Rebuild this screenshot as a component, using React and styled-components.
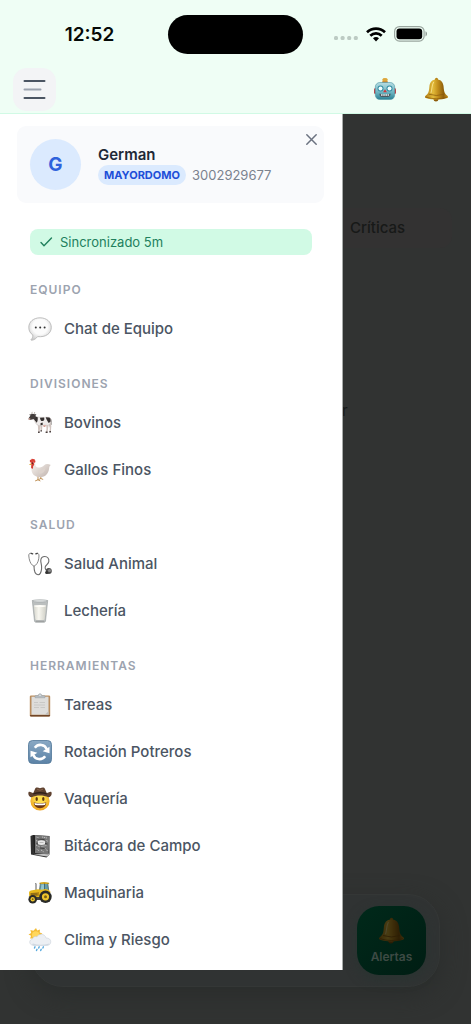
import styled, { createGlobalStyle, css } from 'styled-components';

const GlobalStyle = createGlobalStyle`
	* {
		box-sizing: border-box;
	}

	body {
		margin: 0;
		font-family: Inter, "Liberation Sans", sans-serif;
		background-color: #effef5;
	}

	button {
		border: none;
		padding: 0;
		background: none;
		font-family: inherit;
		cursor: pointer;
	}
`;

const Page = styled.div`
	min-height: 100vh;
	display: flex;
	flex-direction: column;
`;

const Header = styled.header`
	background-color: #effef5;
	border-bottom: 1px solid #d1fae5;
`;

const StatusBar = styled.div`
	display: grid;
	grid-template-columns: 1fr 135px 1fr;
	align-items: center;
	height: 68px;
`;

const Time = styled.time`
	padding-left: 11px;
	text-align: center;
	font-size: 19px;
	font-weight: 600;
	color: #050a07;
`;

const Island = styled.div`
	height: 39px;
	border-radius: 20px;
	background-color: #000;
`;

const Signals = styled.div`
	display: flex;
	justify-content: flex-end;
	align-items: center;
	gap: 8px;
	padding-right: 43px;
`;

const Toolbar = styled.div`
	display: flex;
	justify-content: space-between;
	align-items: center;
	padding: 0 22px 2px 13px;
`;

const MenuButton = styled.button`
	display: grid;
	place-items: center;
	width: 43px;
	height: 43px;
	border-radius: 14px;
	background-color: #f3f4f6;
`;

const Actions = styled.div`
	display: flex;
	gap: 27px;
`;

const IconButton = styled.button`
	display: flex;
`;

const Stage = styled.main`
	position: relative;
	flex: 1;
	display: flex;
	flex-direction: column;
	background-color: #313332;
`;

const Drawer = styled.aside`
	position: absolute;
	top: 0;
	left: 0;
	width: calc(100% - 128px);
	padding: 12px 18px 7px 17px;
	background-color: #fff;
	border-right: 1px solid #a8acaa;
`;

const ProfileCard = styled.div`
	display: flex;
	align-items: flex-start;
	gap: 17px;
	padding: 13px 6px 13px 13px;
	border-radius: 9px;
	background-color: #f9fafc;
`;

const Avatar = styled.div`
	display: grid;
	place-items: center;
	width: 51px;
	height: 51px;
	border-radius: 50%;
	background-color: #dbeafe;
	color: #2f62dc;
	font-size: 19px;
	font-weight: 700;
`;

const Profile = styled.div`
	flex: 1;
	padding-top: 6px;
`;

const Name = styled.div`
	font-size: 15px;
	line-height: 20px;
	font-weight: 600;
	color: #1f2937;
`;

const Meta = styled.div`
	display: flex;
	align-items: center;
	gap: 6px;
	font-size: 13px;
	color: #7b828e;
`;

const Role = styled.span`
	padding: 0 6px;
	border-radius: 10px;
	background-color: #dbeafe;
	color: #1d4ed8;
	font-size: 11px;
	line-height: 20px;
	font-weight: 700;
`;

const CloseButton = styled.button`
	display: flex;
	margin-top: -6px;
`;

const SyncStatus = styled.div`
	display: flex;
	align-items: center;
	gap: 7px;
	height: 26px;
	margin: 26px 12px 26px 13px;
	padding: 0 10px;
	border-radius: 8px;
	background-color: #d1fae5;
	color: #21805d;
	font-size: 13px;
`;

const Section = styled.section`
	& + & {
		margin-top: 23px;
	}
`;

const SectionTitle = styled.h2`
	margin: 0 0 7px;
	padding-left: 13px;
	font-size: 12px;
	line-height: 17px;
	font-weight: 600;
	letter-spacing: 1px;
	color: #9ca3af;
`;

const MenuItem = styled.a`
	display: flex;
	align-items: center;
	gap: 12px;
	height: 47px;
	padding-left: 11px;
	font-size: 15px;
	font-weight: 500;
	color: #4b5563;
	text-decoration: none;
`;

const dimmed = css`
	margin-left: calc(100% - 129px);
	color: #171918;
	font-size: 15px;
	line-height: 20px;
`;

const FilterChip = styled.div`
	${dimmed}
	margin-top: 94px;
	margin-right: 19px;
	padding: 10px 8px;
	border-radius: 0 12px 12px 0;
	background-color: #333232;
	font-weight: 500;
`;

const Caption = styled.div`
	${dimmed}
	margin-top: 153px;
`;

const BottomNav = styled.nav`
	display: flex;
	justify-content: flex-end;
	margin: auto 31px 37px;
	padding: 11px 13px;
	border: 1px solid #343736;
	border-radius: 32px;
	background-color: #303333;
	box-shadow: 0 8px 24px #2a2d2c;
`;

const NavTab = styled.button`
	display: flex;
	flex-direction: column;
	align-items: center;
	justify-content: center;
	gap: 5px;
	width: 69px;
	height: 69px;
	border-radius: 22px;
	background: linear-gradient(135deg, #00291a, #001d13);
	box-shadow: 0 4px 12px #293431;
	color: #3d4a44;
	font-size: 12px;
	line-height: 15px;
	font-weight: 600;

	svg {
		filter: brightness(0.32);
	}
`;

function SignalDots() {
	return (
		<svg width="24" height="12" viewBox="0 0 24 12" fill="#bccbc3">
			<rect x="0" y="8" width="4" height="4" rx="1.5" />
			<rect x="6.6" y="8" width="4" height="4" rx="1.5" />
			<rect x="13.2" y="8" width="4" height="4" rx="1.5" />
			<rect x="19.8" y="8" width="4" height="4" rx="1.5" />
		</svg>
	);
}

function Wifi() {
	return (
		<svg width="20" height="15" viewBox="0 0 20 15" fill="none" stroke="#000" strokeWidth="2.7">
			<path d="M1 5.2C6.2.3 13.800.3 19 5.200" />
			<path d="M4.300 8.700c3.300-3.100 8.100-3.100 11.400 0" />
			<path d="M7 11.200c1.700-1.500 4.300-1.500 6 0L10 14.500z" fill="#000" stroke="none" />
		</svg>
	);
}

function Battery() {
	return (
		<svg width="34" height="16" viewBox="0 0 34 16">
			<rect x="0.6" y="0.6" width="29.500" height="14.500" rx="4.800" fill="none" stroke="#9aa69f" strokeWidth="1.200" />
			<rect x="2.500" y="2.500" width="25.700" height="10.700" rx="3" fill="#000" />
			<path d="M31.500 5.300c2 .8 2 4.300 0 5.100z" fill="#8f9a94" />
		</svg>
	);
}

function MenuLines() {
	return (
		<svg width="23" height="21" viewBox="0 0 23 21" strokeWidth="2" strokeLinecap="round">
			<path d="M1.500 2h20M1.500 19h20" stroke="#4b5563" />
			<path d="M1.500 10.500h16" stroke="#9ca3af" />
		</svg>
	);
}

function Cross() {
	return (
		<svg width="13" height="13" viewBox="0 0 13 13" stroke="#6b7280" strokeWidth="1.500" strokeLinecap="round">
			<path d="M1.800 1.800l9.400 9.400M11.200 1.800l-9.400 9.400" />
		</svg>
	);
}

function Check() {
	return (
		<svg width="13" height="12" viewBox="0 0 13 12" fill="none" stroke="#21805d" strokeWidth="1.400" strokeLinecap="round" strokeLinejoin="round">
			<path d="M1 6.500l3 3.200L11.500 2" />
		</svg>
	);
}

function Robot() {
	return (
		<svg width="24" height="24" viewBox="0 0 24 24">
			<defs>
				<linearGradient id="robotFace" x1="0" y1="0" x2="0" y2="1">
					<stop offset="0" stopColor="#b7dde2" />
					<stop offset="0.6" stopColor="#68b3c0" />
					<stop offset="1" stopColor="#2a7f92" />
				</linearGradient>
			</defs>
			<path d="M9.500 6V2.300q0-1.300 2.500-1.300t2.500 1.300V6z" fill="#dda73c" />
			<path d="M9.300 4.500h5.400V7H9.300z" fill="#b9793b" />
			<rect x="1" y="11" width="3.500" height="6" rx="1.500" fill="#c23c43" />
			<rect x="19.500" y="11" width="3.500" height="6" rx="1.500" fill="#c23c43" />
			<rect x="2.300" y="5.500" width="19.400" height="17" rx="4.500" fill="url(#robotFace)" stroke="#4e95a4" strokeWidth="0.600" />
			<circle cx="7.500" cy="11.600" r="3" fill="#348da3" />
			<circle cx="16.500" cy="11.600" r="3" fill="#348da3" />
			<circle cx="7.500" cy="11.600" r="2" fill="#f2feff" />
			<circle cx="16.500" cy="11.600" r="2" fill="#f2feff" />
			<path d="M12 12.300l1.900 3h-3.800z" fill="#cf383a" />
			<path d="M6.500 16.500q5.500 2 11 0v1.500q-1 2-2.500 2H9q-2 0-2.500-2z" fill="#4b5961" />
			<path d="M8 18h8" stroke="#e5f0f0" strokeWidth="1.500" strokeDasharray="1.600 0.600" />
		</svg>
	);
}

function Bell({ size = 25 }) {
	return (
		<svg width={size} height={size} viewBox="0 0 24 24">
			<defs>
				<linearGradient id="bellBody" x1="0" y1="0" x2="1" y2="0">
					<stop offset="0" stopColor="#b07d12" />
					<stop offset="0.35" stopColor="#e3bb3a" />
					<stop offset="0.55" stopColor="#c4911d" />
					<stop offset="0.8" stopColor="#8f600c" />
					<stop offset="1" stopColor="#c99722" />
				</linearGradient>
			</defs>
			<circle cx="12" cy="2.200" r="1.500" fill="#b78318" />
			<ellipse cx="11.500" cy="21.500" rx="2.300" ry="2" fill="#8d5c0c" />
			<path d="M12 2.300C7.500 2.300 5.600 5 5.200 9 4.800 14 4.400 15.500 1.300 18.200c-.6.600-.5 1.700.5 2 6 2 14.400 2 20.400 0 1-.3 1.100-1.400.5-2C19.600 15.500 19.200 14 18.800 9 18.400 5 16.500 2.300 12 2.300z" fill="url(#bellBody)" />
			<path d="M4.500 16.500q7.500 2.500 15 0M1.800 19.300q10.200 3.200 20.400 0" fill="none" stroke="#8b5b0b" strokeWidth="0.700" />
			<path d="M9.200 5C7.500 7 7.800 12 6.800 15" fill="none" stroke="#f7e28c" strokeWidth="0.900" strokeLinecap="round" />
		</svg>
	);
}

function Chat() {
	return (
		<svg width="24" height="24" viewBox="0 0 24 24">
			<defs>
				<radialGradient id="chatFill" cx="0.5" cy="0.4" r="0.6">
					<stop offset="0.55" stopColor="#fbfbfb" />
					<stop offset="1" stopColor="#cfcfcf" />
				</radialGradient>
			</defs>
			<path d="M12 .8C5.500.8.800 4.800.800 10.400c0 3.500 1.500 5.900 4 7.500.2 2-.6 3.600-1.600 4.500-.4.600.1.900.7.8 2.500-.3 4.400-1.900 5.700-3.600 8 .9 13.700-3.100 13.700-9.200C23.300 4.800 18.500.8 12 .8z" fill="url(#chatFill)" stroke="#b1b1b1" strokeWidth="0.800" />
			<g fill="#343434">
				<circle cx="7.800" cy="10.500" r="1" />
				<circle cx="12.200" cy="10.500" r="1" />
				<circle cx="16.600" cy="10.500" r="1" />
			</g>
		</svg>
	);
}

function Cow() {
	return (
		<svg width="24" height="24" viewBox="0 0 24 24">
			<path d="M21.500 6.800c1.900.8 1.800 4 1.500 7.200" fill="none" stroke="#625a57" strokeWidth="0.800" />
			<path d="M9.800 13l.4 8h1.500l.5-6zM12.300 14l.3 6H14l.4-5.500zM18.200 13.500l.3 4.500-.7 3.500h1.700l1-7zM20.300 13l1.500 4-.3 4h1.400l.4-6-1-4z" fill="#d0c4bf" />
			<path d="M10.100 20.600h1.600v1.300h-1.700zM12.500 19.300H14v1.200h-1.600zM17.700 20.600h1.900v1.300h-2zM21.400 20h1.600v1.400h-1.700z" fill="#4a4140" />
			<path d="M6 5c4 1.700 9 1.500 13.500 1.200 2.600-.1 3.400 1.200 3.300 3.400-.1 2.600-.9 4.200-2.800 4.800-3-.7-6 .4-9.500 0-2.800-.8-3-3-4.800-6z" fill="#eeebea" stroke="#b3aaa6" strokeWidth="0.400" />
			<path d="M6 4.900l3.700 1.300c.2 2.400 0 3.700-.9 5.600C7.500 10.800 7 9.300 5.700 8.100zM12 6.700l4-.3c.8 1.800.2 2.800-1 3.500-1.500.7-2.700-.3-3-3.200zM17.800 6.300l3.300.2c1.400.8 1.700 1.900 1.500 3.900-1.200 1.200-1.600 1.500-2.500 1.200-.3-1.900-1.800-2.200-2.300-5.300zM12.500 12.300l2-.8.4 2.200-2.300.5z" fill="#35302f" />
			<path d="M3.800 3.300q-.4-1.200.3-2.100M6.100 3.300q.8-.7.6-1.900" fill="none" stroke="#a39b91" strokeWidth="0.700" strokeLinecap="round" />
			<path d="M3 3.200q2.200-.9 3.700.1l1.700-.1-.9 1.500.1 2.700L5 8.300 2 9 .6 8.300l.3-1.500 1.600-2.200-1.500-.8z" fill="#433d3c" />
			<path d="M.7 7l1.600.3.1 1.400-.8.400-1.100-.5z" fill="#c79e95" />
			<path d="M15 14.300h3l-.8 1.700h-1.500z" fill="#d49e93" />
		</svg>
	);
}

function Rooster() {
	return (
		<svg width="24" height="24" viewBox="0 0 24 24">
			<defs>
				<linearGradient id="roosterBody" x1="0" y1="0" x2="1" y2="1">
					<stop offset="0" stopColor="#fbf7f3" />
					<stop offset="1" stopColor="#bfb2ac" />
				</linearGradient>
			</defs>
			<path d="M10 17.500v4.300l-2.500 1M10 21.800l2 1M12.800 17v3.500l-2 1M12.800 20.500l2 .8" fill="none" stroke="#b98645" strokeWidth="0.900" strokeLinecap="round" />
			<path d="M3.200 3.500C5.500 2.200 7.200 3.500 7.300 6c.1 2.200 1 3.500 2.900 3.500 2.500 0 4.600-.6 6-2.300 1.500-1.600 4-1.700 6.600-.2-1.300 1-1.500 2-1.700 3.500-.5 4.700-3.300 8.700-9.100 8.700-5.200 0-8.600-3.400-8.600-8.200 0-2 .5-2.500.3-4z" fill="url(#roosterBody)" />
			<path d="M9.500 12.300c3 .2 5.400-.5 7.700-2.300-.2 3.800-2.800 6.300-6 5.300" fill="#ddd3cd" />
			<path d="M2.300 4.500C1.300 3 1.900 1.400 3.100 1.900 3.300.5 4.700.4 5.100 1.300c1-.7 2 .1 1.600 1C7.800 2.500 7.600 4 6.800 5L5.500 3.800z" fill="#d94036" />
			<path d="M3 4.200l2.500-.5.8 2.500-1.300 2.500c.4 1.500-.4 2.400-1.200 1.900-.8-.7-.9-1.800-.5-2.700z" fill="#d23b33" />
			<path d="M3.300 5.300L.8 6.600l2.500.7z" fill="#dcae42" />
			<circle cx="4.400" cy="5.200" r="0.600" fill="#331c18" />
		</svg>
	);
}

function Stethoscope() {
	return (
		<svg width="24" height="24" viewBox="0 0 24 24" fill="none">
			<path d="M3.800 1.500C1.500.8.500 2 .8 4c.4 3.800 1.200 7 3.600 9.200 1 .9 2.200.9 3.200 0 2.400-2.200 3.200-5.400 3.400-9.200.1-2-1-3.200-2.900-2.500" stroke="#888" strokeWidth="1" />
			<path d="M6 14c0 5 1.200 8.500 4 8.700 3 .2 3.200-3 3.600-6.200C14 12.500 12.500 11 12.800 8c.3-2.600 2-3.500 4-3.500 2.800 0 4.500 2.300 4 5.200-.4 2.300-2.900 3.500-3.500 5-.6 1.900.5 3.700 2.500 4.300" stroke="#6b6b6b" strokeWidth="1.100" />
			<path d="M3.200 1.300l1.500.5M7.800 1.800l1.500-.5" stroke="#444" strokeWidth="1.300" strokeLinecap="round" />
			<circle cx="20.800" cy="19" r="3" fill="#4c4c4c" />
			<circle cx="21.500" cy="18.500" r="1.600" fill="#898989" />
			<circle cx="18.700" cy="20.500" r="1.600" fill="#333" />
		</svg>
	);
}

function Milk() {
	return (
		<svg width="24" height="24" viewBox="0 0 24 24">
			<defs>
				<linearGradient id="milkFill" x1="0" y1="0" x2="1" y2="0">
					<stop offset="0" stopColor="#d6d6cd" />
					<stop offset="0.4" stopColor="#f8f7f0" />
					<stop offset="1" stopColor="#cfcfc6" />
				</linearGradient>
			</defs>
			<path d="M4.300 1.500L6.500 22q.2 1.300 1.500 1.300h8q1.300 0 1.500-1.300l2.200-20.500z" fill="#bbbfbf" stroke="#969b9b" strokeWidth="0.600" />
			<ellipse cx="12" cy="1.900" rx="7.600" ry="1.200" fill="#dfe2e2" stroke="#a0a5a6" strokeWidth="0.600" />
			<path d="M5.800 7L7.300 20.200q.2.800 1 .8h7.400q.8 0 1-.8L18.200 7z" fill="url(#milkFill)" />
			<ellipse cx="12" cy="7" rx="6.200" ry="0.900" fill="#fffef9" />
			<path d="M8 22.300h8" stroke="#8f9393" strokeWidth="0.800" />
		</svg>
	);
}

function Clipboard() {
	return (
		<svg width="24" height="24" viewBox="0 0 24 24">
			<rect x="1.800" y="2.500" width="20.400" height="21" rx="1.200" fill="#b98d5f" />
			<path d="M2 22h20v.6q0 .9-1 .9H3q-1 0-1-.9z" fill="#704629" />
			<rect x="3.500" y="3.700" width="17" height="18" fill="#dedddb" />
			<path d="M17 21.700l3.500-3.500v3.500z" fill="#bdbcba" />
			<path d="M6 9.500h4M11.500 9.500h5.500M6 12h11M6 14.500h5M12.500 14.500h4.500" stroke="#c9c8c6" strokeWidth="1" />
			<path d="M7 4.800V3.200q0-.7.800-.7h2.300C10.300.2 13.700.2 13.900 2.500h2.300q.8 0 .8.700v1.600z" fill="#b4bbc0" stroke="#8e969b" strokeWidth="0.400" />
			<circle cx="12" cy="2.200" r="0.700" fill="#f8f8f8" />
		</svg>
	);
}

function Rotate() {
	return (
		<svg width="24" height="24" viewBox="0 0 24 24">
			<defs>
				<linearGradient id="rotateFill" x1="0" y1="0" x2="0" y2="1">
					<stop offset="0" stopColor="#8aa9c4" />
					<stop offset="1" stopColor="#5b82a6" />
				</linearGradient>
			</defs>
			<rect x="0.500" y="0.500" width="23" height="23" rx="4" fill="url(#rotateFill)" stroke="#4f7698" strokeWidth="0.800" />
			<g fill="none" stroke="#fff" strokeWidth="2.600">
				<path d="M6.800 7.700C10.200 3.300 17 4.200 18.700 9.200" />
				<path d="M17.200 16.300C13.800 20.700 7 19.800 5.300 14.800" />
			</g>
			<path d="M21.500 6.800v6.500l-6.800-2z" fill="#fff" />
			<path d="M2.500 17.200v-6.500l6.800 2z" fill="#fff" />
		</svg>
	);
}

function Cowboy() {
	return (
		<svg width="24" height="24" viewBox="0 0 24 24">
			<defs>
				<radialGradient id="cowboyFace" cx="0.5" cy="0.4" r="0.65">
					<stop offset="0.3" stopColor="#ffdf4d" />
					<stop offset="1" stopColor="#ec9b19" />
				</radialGradient>
			</defs>
			<circle cx="12" cy="14" r="9.600" fill="url(#cowboyFace)" />
			<ellipse cx="8.700" cy="12" rx="1.200" ry="2" fill="#61370f" />
			<ellipse cx="15.300" cy="12" rx="1.200" ry="2" fill="#61370f" />
			<path d="M5.800 15.500q6.200 1.500 12.400 0c0 3.400-2.500 5.700-6.200 5.700s-6.200-2.300-6.200-5.700z" fill="#6b3514" />
			<path d="M6.400 15.900q5.600 1.300 11.200 0-.1 1.200-.7 2-4.900.9-9.800 0-.6-.8-.7-2z" fill="#fff" />
			<path d="M.5 5.200C1.500 4 3 5.500 5.300 6L7 2C7.700.3 9.500.3 12 1.200 14.500.3 16.300.3 17 2l1.700 4c2.300-.5 3.800-2 4.800-.8.7 2.500-.8 4.800-3 5C18 9 15 8.500 12 8.500S6 9 3.500 10.200c-2.200-.2-3.700-2.500-3-5z" fill="#5f4230" />
			<path d="M5.500 5.900q6.500-1.800 13 0l.4 1.500q-6.900-1.800-13.800 0z" fill="#2f2019" />
			<path d="M9 2.200q3 2.200 6 0" stroke="#8b6850" fill="none" strokeWidth="0.900" />
		</svg>
	);
}

function Notebook() {
	return (
		<svg width="24" height="24" viewBox="0 0 24 24">
			<path d="M2.500 2L5 1l16.500 1v18.500L18.500 23.500 3 20.500z" fill="#303030" />
			<path d="M5.500 20.500l13.500 2 2.500-2-.3-1z" fill="#c3c3c3" />
			<path d="M5 1l16.500 1.200-1 18.300L5.300 18.800z" fill="#777" />
			<path d="M5 1l2 .2v17.700l-1.700-.1z" fill="#202020" />
			<path d="M8.500 3l3 1.500M14 3l5 1M8 6.500l2 1M18.500 6l1.500 2M8 11l4 2M13.500 12.500l5-1M8.500 15l3 2M13 16l3 2M17.500 14.500l2 2.500" stroke="#c0c0c0" strokeWidth="1" strokeDasharray="1.200 0.700" />
			<path d="M8.500 9.500l2 .8M12 14l4.500.5M17 9.500l2.500.5M9.500 5l7 .5" stroke="#393939" strokeWidth="0.900" />
			<path d="M10 7q3.500-1.800 7 .2v3q-3.500 1.600-7 0z" fill="#e8e8e8" />
			<path d="M11.500 8.500h4" stroke="#999" strokeWidth="0.600" />
		</svg>
	);
}

function Tractor() {
	return (
		<svg width="24" height="24" viewBox="0 0 24 24">
			<path d="M11.500 9.500L12.600 2h7l1.200 8z" fill="#679fac" />
			<path d="M13.500 3.500h3l-.5 6.500h-3.500z" fill="#94c5cd" />
			<path d="M11.400 1.700q4.500-1.400 9.600 0l.2 1.300H11.500z" fill="#d2a622" />
			<path d="M12.300 2.500l-1 8M19.800 2.500l1 8M16.500 2.500v7" stroke="#3a5053" strokeWidth="0.700" />
			<path d="M8 9.500V2.800L7.300 2" stroke="#58595a" strokeWidth="1" fill="none" />
			<path d="M1 11.500q.2-1.500 1.800-1.900L10 8.300l4 .5q6-2.300 8.500 2l-2 6.200H2.500q-2-2-1.500-5.500z" fill="#e7b91d" />
			<path d="M2 12.200l9-1.200v3.800H2.500z" fill="#b98913" />
			<path d="M3 12.800h6.500M3 14h6.500" stroke="#624d1b" strokeWidth="0.600" />
			<path d="M7 16h6v3H7z" fill="#44423a" />
			<circle cx="17.500" cy="15.800" r="6.200" fill="#292a27" />
			<circle cx="17.500" cy="15.800" r="3.600" fill="#edc42d" />
			<circle cx="17.500" cy="15.800" r="1.500" fill="#7c6115" />
			<circle cx="4.700" cy="18.200" r="4.300" fill="#292a27" />
			<circle cx="4.700" cy="18.200" r="2.200" fill="#edc42d" />
			<circle cx="4.700" cy="18.200" r="0.900" fill="#7c6115" />
		</svg>
	);
}

function Weather() {
	return (
		<svg width="24" height="24" viewBox="0 0 24 24">
			<path d="M8 0l1.200 2.600L12 1.600l-.3 2.900 2.700 1-2.100 2 1.500 2.800-3 .2-.8 2.700L8 11.500l-2.200 1.700-.7-2.800-3 .1 1-2.700L.5 6.400l2.700-1.500-.8-2.900 3 .7z" fill="#f4bc35" />
			<circle cx="7.700" cy="7" r="3.700" fill="#ffd75c" />
			<path d="M6 17.500c-5.200 0-5.600-5.600-1.600-6.400C5 8.700 7.200 8 9 8.800 10.200 5.500 16.800 5 18 10c3-.3 4.800 1.600 4.800 3.800 0 2.300-1.700 3.700-4.300 3.700z" fill="#eceff3" stroke="#c3cbd4" strokeWidth="0.500" />
			<path d="M5 15.500q7 2.500 16.500 0-.8 2-3 2H6q-1.500-.2-2-1.200z" fill="#cfd8e1" />
			<path d="M7 18.800l-.5 1.300M11.200 18.800l-.5 1.300M15.400 18.800l-.5 1.300M9 21.300l-.5 1.300M13.200 21.300l-.5 1.300" stroke="#57aade" strokeWidth="1.400" strokeLinecap="round" />
		</svg>
	);
}

const sections = [
	{
		title: 'EQUIPO',
		items: [{ label: 'Chat de Equipo', Icon: Chat }],
	},
	{
		title: 'DIVISIONES',
		items: [
			{ label: 'Bovinos', Icon: Cow },
			{ label: 'Gallos Finos', Icon: Rooster },
		],
	},
	{
		title: 'SALUD',
		items: [
			{ label: 'Salud Animal', Icon: Stethoscope },
			{ label: 'Lechería', Icon: Milk },
		],
	},
	{
		title: 'HERRAMIENTAS',
		items: [
			{ label: 'Tareas', Icon: Clipboard },
			{ label: 'Rotación Potreros', Icon: Rotate },
			{ label: 'Vaquería', Icon: Cowboy },
			{ label: 'Bitácora de Campo', Icon: Notebook },
			{ label: 'Maquinaria', Icon: Tractor },
			{ label: 'Clima y Riesgo', Icon: Weather },
		],
	},
];

function SideMenu() {
	return (
		<Drawer>
			<ProfileCard>
				<Avatar>G</Avatar>
				<Profile>
					<Name>German</Name>
					<Meta>
						<Role>MAYORDOMO</Role>
						<span>3002929677</span>
					</Meta>
				</Profile>
				<CloseButton aria-label="Cerrar">
					<Cross />
				</CloseButton>
			</ProfileCard>
			<SyncStatus>
				<Check />
				<span>Sincronizado 5m</span>
			</SyncStatus>
			<nav>
				{sections.map(({ title, items }) => (
					<Section key={title}>
						<SectionTitle>{title}</SectionTitle>
						{items.map(({ label, Icon }) => (
							<MenuItem key={label} href="#">
								<Icon />
								{label}
							</MenuItem>
						))}
					</Section>
				))}
			</nav>
		</Drawer>
	);
}

function App() {
	return (
		<Page>
			<GlobalStyle />
			<Header>
				<StatusBar>
					<Time>12:52</Time>
					<Island />
					<Signals>
						<SignalDots />
						<Wifi />
						<Battery />
					</Signals>
				</StatusBar>
				<Toolbar>
					<MenuButton aria-label="Menú">
						<MenuLines />
					</MenuButton>
					<Actions>
						<IconButton aria-label="Asistente">
							<Robot />
						</IconButton>
						<IconButton aria-label="Alertas">
							<Bell />
						</IconButton>
					</Actions>
				</Toolbar>
			</Header>
			<Stage>
				<FilterChip>Críticas</FilterChip>
				<Caption>r</Caption>
				<BottomNav>
					<NavTab>
						<Bell size={27} />
						Alertas
					</NavTab>
				</BottomNav>
				<SideMenu />
			</Stage>
		</Page>
	);
}

export default App;
